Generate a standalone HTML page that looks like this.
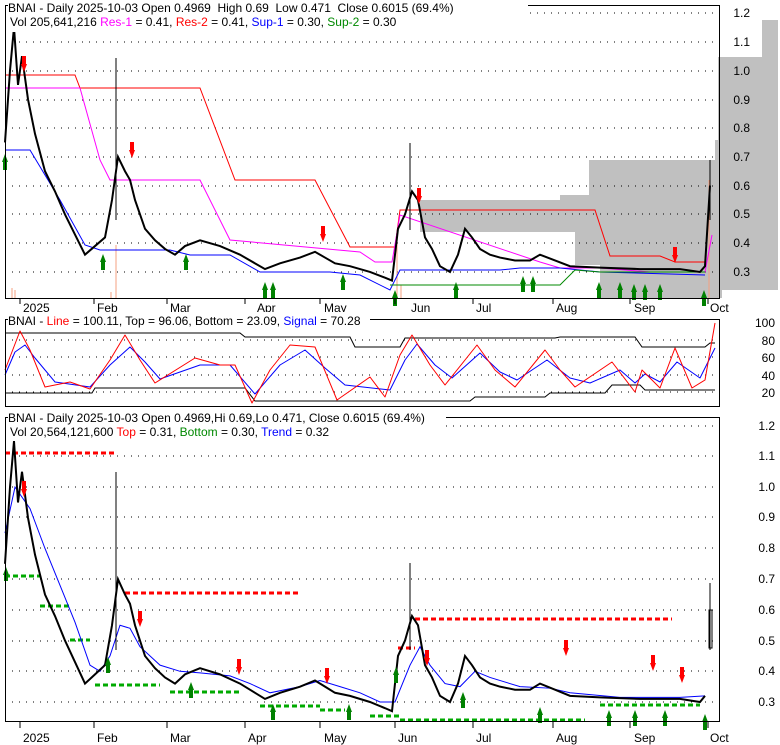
<!DOCTYPE html>
<html><head><style>
body{margin:0;background:#fff;width:780px;height:745px;overflow:hidden}
svg{display:block}
text{font-family:"Liberation Sans",sans-serif;font-size:12px}
</style></head><body>
<svg width="780" height="745" viewBox="0 0 780 745">
<g fill="#c0c0c0">
<polygon points="762,20 778,20 778,290 722,290 722,160 715,160 715,140 718,140 718,57 762,57"/>
<polygon points="589,160 722,160 722,298 600,298 600,265 575,265 575,232 420,232 420,200 560,200 560,195 589,195"/>
</g>
<g stroke="#000" stroke-dasharray="1,6" stroke-width="1">
<line x1="5" x2="720" y1="13" y2="13"/><line x1="5" x2="720" y1="42" y2="42"/><line x1="5" x2="720" y1="71" y2="71"/><line x1="5" x2="720" y1="100" y2="100"/><line x1="5" x2="720" y1="128" y2="128"/><line x1="5" x2="720" y1="157" y2="157"/><line x1="5" x2="720" y1="186" y2="186"/><line x1="5" x2="720" y1="214" y2="214"/><line x1="5" x2="720" y1="243" y2="243"/><line x1="5" x2="720" y1="272" y2="272"/>
<line x1="5" x2="720" y1="340" y2="340"/><line x1="5" x2="720" y1="357" y2="357"/><line x1="5" x2="720" y1="375" y2="375"/><line x1="5" x2="720" y1="392" y2="392"/>
<line x1="5" x2="720" y1="426" y2="426"/><line x1="5" x2="720" y1="456" y2="456"/><line x1="5" x2="720" y1="487" y2="487"/><line x1="5" x2="720" y1="517" y2="517"/><line x1="5" x2="720" y1="548" y2="548"/><line x1="5" x2="720" y1="579" y2="579"/><line x1="5" x2="720" y1="610" y2="610"/><line x1="5" x2="720" y1="641" y2="641"/><line x1="5" x2="720" y1="671" y2="671"/><line x1="5" x2="720" y1="702" y2="702"/>
</g>
<g stroke="#f4a080" stroke-width="1">
<line x1="12" y1="298" x2="12" y2="288"/><line x1="15" y1="298" x2="15" y2="290"/><line x1="116" y1="298" x2="116" y2="245"/><line x1="111" y1="298" x2="111" y2="292"/><line x1="397" y1="298" x2="397" y2="240"/><line x1="401" y1="298" x2="401" y2="285"/><line x1="709" y1="298" x2="709" y2="180"/>
</g>
<polyline fill="none" stroke="#f00" points="5,75 75,75 80,88 200,88 235,180 315,180 350,247 395,247 400,210 595,210 610,256 660,256 675,262 705,262 710,190"/>
<polyline fill="none" stroke="#f0f" points="5,88 80,88 100,160 110,180 200,180 230,240 360,252 375,262 392,262 400,215 540,262 560,268 600,268 650,272 705,272 712,235"/>
<polyline fill="none" stroke="#00f" points="5,150 30,150 60,200 85,245 100,250 150,250 170,250 190,255 230,255 260,272 330,272 360,275 390,290 400,270 440,270 500,270 520,268 560,268 600,272 705,275"/>
<polyline fill="none" stroke="#080" points="390,285 560,285 575,270 600,272 705,272"/>
<g transform="translate(0,358.3) scale(1,-0.2878)">
<polyline fill="none" stroke="#000" stroke-width="2" vector-effect="non-scaling-stroke" points="5,750 10,1000 14,1150 18,950 22,1050 28,900 35,780 45,650 55,580 65,500 75,430 85,360 95,390 105,420 112,550 118,700 125,650 130,620 135,550 145,450 155,410 165,380 175,360 185,390 200,410 220,390 240,360 255,330 265,310 280,330 300,350 315,370 325,350 335,330 350,320 370,300 385,280 392,270 398,450 405,500 412,580 418,550 425,420 432,380 440,320 450,300 458,360 465,450 472,420 480,380 490,360 500,350 515,340 530,340 540,360 555,340 570,320 600,315 640,310 680,310 700,300 705,320 710,600"/>
</g>
<line x1="116" y1="58" x2="116" y2="220" stroke="#000"/><line x1="410" y1="143" x2="410" y2="230" stroke="#000"/><line x1="710" y1="160" x2="710" y2="220" stroke="#000"/>
<g fill="#008000">
<path d="M2,162 h6 l-3,-8z M3,162 h4 v8 h-4z"/>
<path d="M100,262 h6 l-3,-8z M101,262h4v8h-4z"/><path d="M183,262 h6 l-3,-8z M184,262h4v8h-4z"/><path d="M262,290 h6 l-3,-8z M263,290h4v8h-4z"/><path d="M270,290 h6 l-3,-8z M271,290h4v8h-4z"/><path d="M340,282 h6 l-3,-8z M341,282h4v8h-4z"/><path d="M392,298 h6 l-3,-8z M393,298h4v8h-4z"/><path d="M453,290 h6 l-3,-8z M454,290h4v8h-4z"/><path d="M520,284 h6 l-3,-8z M521,284h4v8h-4z"/><path d="M530,284 h6 l-3,-8z M531,284h4v8h-4z"/><path d="M596,290 h6 l-3,-8z M597,290h4v8h-4z"/><path d="M617,290 h6 l-3,-8z M618,290h4v8h-4z"/><path d="M631,292 h6 l-3,-8z M632,292h4v8h-4z"/><path d="M642,292 h6 l-3,-8z M643,292h4v8h-4z"/><path d="M657,292 h6 l-3,-8z M658,292h4v8h-4z"/><path d="M701,298 h6 l-3,-8z M702,298h4v8h-4z"/>
</g>
<g fill="#f00">
<path d="M21,64h6l-3,8z M22,56h4v8h-4z"/><path d="M129,150h6l-3,8z M130,142h4v8h-4z"/><path d="M320,234h6l-3,8z M321,226h4v8h-4z"/><path d="M416,196h6l-3,8z M417,188h4v8h-4z"/><path d="M672,255h6l-3,8z M673,247h4v8h-4z"/>
</g>
<rect x="5.5" y="5.5" width="714" height="293" fill="none" stroke="#000"/>
<rect x="8" y="0" width="520" height="32" fill="#fff"/>
<text x="8" y="12">BNAI - Daily 2025-10-03 Open 0.4969&#160; High 0.69&#160; Low 0.471&#160; Close 0.6015 (69.4%)</text>
<text x="10" y="26">Vol 205,641,216 <tspan fill="#f0f">Res-1</tspan> = 0.41, <tspan fill="#f00">Res-2</tspan> = 0.41, <tspan fill="#00f">Sup-1</tspan> = 0.30, <tspan fill="#080">Sup-2</tspan> = 0.30</text>
<g text-anchor="end"><text x="750" y="17">1.2</text><text x="750" y="46">1.1</text><text x="750" y="75">1.0</text><text x="750" y="104">0.9</text><text x="750" y="132">0.8</text><text x="750" y="161">0.7</text><text x="750" y="190">0.6</text><text x="750" y="218">0.5</text><text x="750" y="247">0.4</text><text x="750" y="276">0.3</text></g>
<g stroke="#000"><line x1="20" y1="298" x2="20" y2="304"/><line x1="94" y1="298" x2="94" y2="304"/><line x1="167" y1="298" x2="167" y2="304"/><line x1="245" y1="298" x2="245" y2="304"/><line x1="320" y1="298" x2="320" y2="304"/><line x1="395" y1="298" x2="395" y2="304"/><line x1="473" y1="298" x2="473" y2="304"/><line x1="553" y1="298" x2="553" y2="304"/><line x1="630" y1="298" x2="630" y2="304"/><line x1="708" y1="298" x2="708" y2="304"/></g>
<g><text x="23" y="312">2025</text><text x="97" y="312">Feb</text><text x="170" y="312">Mar</text><text x="257" y="312">Apr</text><text x="324" y="312">May</text><text x="411" y="312">Jun</text><text x="476" y="312">Jul</text><text x="556" y="312">Aug</text><text x="634" y="312">Sep</text><text x="710" y="312">Oct</text></g>
<polyline fill="none" stroke="#000" points="5,333 240,333 245,337 350,337 355,347 400,347 405,338 555,338 560,337 635,337 642,347 705,347 710,343 715,343"/>
<polyline fill="none" stroke="#000" points="5,393 92,393 95,388 245,388 255,401 470,401 475,397 545,397 550,393 605,393 612,385 640,385 645,390 715,390"/>
<polyline fill="none" stroke="#00f" stroke-linejoin="round" points="5,375 15,352 25,345 35,358 55,382 90,387 110,365 130,347 145,362 160,379 200,365 230,365 255,394 280,365 305,350 325,368 345,385 390,390 405,360 417,344 435,365 452,378 480,353 500,372 517,380 547,360 570,378 590,383 620,370 635,383 645,374 660,382 677,362 700,378 715,348"/>
<polyline fill="none" stroke="#f00" stroke-linejoin="round" points="5,370 20,331 30,350 45,387 70,382 90,389 110,360 125,335 140,360 155,383 195,358 220,365 235,365 252,403 270,370 290,345 315,347 337,400 370,377 385,397 400,355 412,335 430,365 445,385 477,345 495,370 515,387 545,350 560,370 575,387 612,362 635,392 642,370 660,388 675,348 692,388 705,380 715,323"/>
<rect x="5.5" y="319.5" width="714" height="87" fill="none" stroke="#000"/>
<rect x="8" y="312" width="362" height="16" fill="#fff"/>
<text x="8" y="325">BNAI - <tspan fill="#f00">Line</tspan> = 100.11, Top = 96.06, Bottom = 23.09, <tspan fill="#00f">Signal</tspan> = 70.28</text>
<g text-anchor="end"><text x="775" y="327">100</text><text x="775" y="345">80</text><text x="775" y="362">60</text><text x="775" y="380">40</text><text x="775" y="397">20</text></g>
<g stroke-width="3" stroke-dasharray="5,3">
<g stroke="#f00"><line x1="5" y1="453" x2="115" y2="453"/><line x1="125" y1="593" x2="300" y2="593"/><line x1="415" y1="619" x2="672" y2="619"/><line x1="398" y1="648" x2="415" y2="648"/></g>
<g stroke="#0a0"><line x1="5" y1="576" x2="40" y2="576"/><line x1="40" y1="606" x2="70" y2="606"/><line x1="70" y1="640" x2="90" y2="640"/><line x1="95" y1="685" x2="160" y2="685"/><line x1="170" y1="692" x2="240" y2="692"/><line x1="260" y1="706" x2="320" y2="706"/><line x1="320" y1="710" x2="345" y2="710"/><line x1="370" y1="716" x2="400" y2="716"/><line x1="400" y1="720" x2="585" y2="720"/><line x1="600" y1="705" x2="700" y2="705"/></g>
</g>
<g transform="translate(0,794.1) scale(1,-0.307)">
<polyline fill="none" stroke="#00f" vector-effect="non-scaling-stroke" points="5,850 15,1000 30,930 45,800 60,680 75,560 90,420 100,400 110,450 120,550 130,540 140,480 160,420 180,400 200,395 230,385 250,360 270,330 300,350 320,370 340,350 360,330 380,300 395,300 410,420 420,480 430,420 445,360 460,350 475,400 490,380 520,350 550,345 570,330 620,315 680,315 705,320"/>
<polyline fill="none" stroke="#000" stroke-width="2" vector-effect="non-scaling-stroke" points="5,750 10,1000 14,1150 18,950 22,1050 28,900 35,780 45,650 55,580 65,500 75,430 85,360 95,390 105,420 112,550 118,700 125,650 130,620 135,550 145,450 155,410 165,380 175,360 185,390 200,410 220,390 240,360 255,330 265,310 280,330 300,350 315,370 325,350 335,330 350,320 370,300 385,280 392,270 398,450 405,500 412,580 418,550 425,420 432,380 440,320 450,300 458,360 465,450 472,420 480,380 490,360 500,350 515,340 530,340 540,360 555,340 570,320 600,315 640,310 680,310 700,300 705,320"/>
</g>
<line x1="116" y1="472" x2="116" y2="650" stroke="#000"/><line x1="410" y1="563" x2="410" y2="650" stroke="#000"/><rect x="709" y="610" width="3" height="38" fill="#fff" stroke="#000"/><line x1="710" y1="583" x2="710" y2="650" stroke="#000"/>
<g fill="#008000">
<path d="M3,575h6l-3,-8z M4,575h4v6h-4z"/><path d="M105,665h6l-3,-8z M106,665h4v8h-4z"/><path d="M188,690h6l-3,-8z M189,690h4v8h-4z"/><path d="M270,712h6l-3,-8z M271,712h4v8h-4z"/><path d="M346,712h6l-3,-8z M347,712h4v8h-4z"/><path d="M393,675h6l-3,-8z M394,675h4v8h-4z"/><path d="M460,700h6l-3,-8z M461,700h4v8h-4z"/><path d="M537,715h6l-3,-8z M538,715h4v8h-4z"/><path d="M606,718h6l-3,-8z M607,718h4v8h-4z"/><path d="M632,718h6l-3,-8z M633,718h4v8h-4z"/><path d="M662,718h6l-3,-8z M663,718h4v8h-4z"/><path d="M702,722h6l-3,-8z M703,722h4v8h-4z"/>
</g>
<g fill="#f00">
<path d="M21,489h6l-3,8z M22,481h4v8h-4z"/><path d="M137,619h6l-3,8z M138,611h4v8h-4z"/><path d="M236,667h6l-3,8z M237,659h4v8h-4z"/><path d="M324,676h6l-3,8z M325,668h4v8h-4z"/><path d="M424,658h6l-3,8z M425,650h4v8h-4z"/><path d="M563,648h6l-3,8z M564,640h4v8h-4z"/><path d="M650,663h6l-3,8z M651,655h4v8h-4z"/><path d="M679,675h6l-3,8z M680,667h4v8h-4z"/>
</g>
<rect x="5.5" y="417.5" width="714" height="304" fill="none" stroke="#000"/>
<rect x="8" y="410" width="438" height="30" fill="#fff"/>
<text x="8" y="422">BNAI - Daily 2025-10-03 Open 0.4969,Hi 0.69,Lo 0.471, Close 0.6015 (69.4%)</text>
<text x="10" y="436">Vol 20,564,121,600 <tspan fill="#f00">Top</tspan> = 0.31, <tspan fill="#080">Bottom</tspan> = 0.30, <tspan fill="#00f">Trend</tspan> = 0.32</text>
<g text-anchor="end"><text x="775" y="430">1.2</text><text x="775" y="460">1.1</text><text x="775" y="491">1.0</text><text x="775" y="521">0.9</text><text x="775" y="552">0.8</text><text x="775" y="583">0.7</text><text x="775" y="614">0.6</text><text x="775" y="645">0.5</text><text x="775" y="675">0.4</text><text x="775" y="706">0.3</text></g>
<g stroke="#000"><line x1="20" y1="722" x2="20" y2="728"/><line x1="94" y1="722" x2="94" y2="728"/><line x1="167" y1="722" x2="167" y2="728"/><line x1="245" y1="722" x2="245" y2="728"/><line x1="320" y1="722" x2="320" y2="728"/><line x1="395" y1="722" x2="395" y2="728"/><line x1="473" y1="722" x2="473" y2="728"/><line x1="553" y1="722" x2="553" y2="728"/><line x1="630" y1="722" x2="630" y2="728"/><line x1="708" y1="722" x2="708" y2="728"/></g>
<g><text x="23" y="742">2025</text><text x="97" y="742">Feb</text><text x="170" y="742">Mar</text><text x="248" y="742">Apr</text><text x="324" y="742">May</text><text x="398" y="742">Jun</text><text x="476" y="742">Jul</text><text x="556" y="742">Aug</text><text x="634" y="742">Sep</text><text x="710" y="742">Oct</text></g>
</svg>
</body></html>
